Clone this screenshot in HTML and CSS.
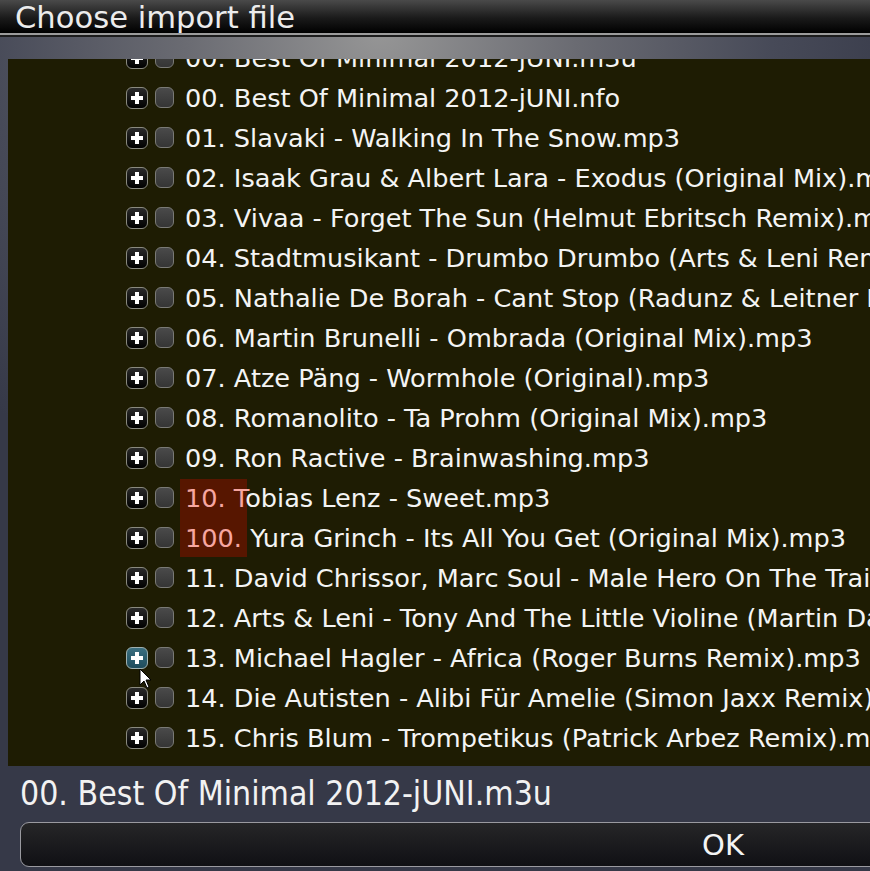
FILE: index.html
```html
<!DOCTYPE html>
<html>
<head>
<meta charset="utf-8">
<link rel="stylesheet" href="styles.css">
</head>
<body>
<div class="dialog">
  <div class="titlebar"><span class="title">Choose import file</span></div>
  <div class="sep"></div>
  <div class="panel">
    <div class="list">
      <div class="mark"></div>
      <div class="rows">
        <div class="row"><span class="plus"></span><span class="check"></span><span class="name">00. Best Of Minimal 2012-jUNI.m3u</span></div>
        <div class="row"><span class="plus"></span><span class="check"></span><span class="name">00. Best Of Minimal 2012-jUNI.nfo</span></div>
        <div class="row"><span class="plus"></span><span class="check"></span><span class="name">01. Slavaki - Walking In The Snow.mp3</span></div>
        <div class="row"><span class="plus"></span><span class="check"></span><span class="name">02. Isaak Grau &amp; Albert Lara - Exodus (Original Mix).mp3</span></div>
        <div class="row"><span class="plus"></span><span class="check"></span><span class="name">03. Vivaa - Forget The Sun (Helmut Ebritsch Remix).mp3</span></div>
        <div class="row"><span class="plus"></span><span class="check"></span><span class="name">04. Stadtmusikant - Drumbo Drumbo (Arts &amp; Leni Remix).mp3</span></div>
        <div class="row"><span class="plus"></span><span class="check"></span><span class="name">05. Nathalie De Borah - Cant Stop (Radunz &amp; Leitner Remix).mp3</span></div>
        <div class="row"><span class="plus"></span><span class="check"></span><span class="name">06. Martin Brunelli - Ombrada (Original Mix).mp3</span></div>
        <div class="row"><span class="plus"></span><span class="check"></span><span class="name">07. Atze Päng - Wormhole (Original).mp3</span></div>
        <div class="row"><span class="plus"></span><span class="check"></span><span class="name">08. Romanolito - Ta Prohm (Original Mix).mp3</span></div>
        <div class="row"><span class="plus"></span><span class="check"></span><span class="name">09. Ron Ractive - Brainwashing.mp3</span></div>
        <div class="row"><span class="plus"></span><span class="check"></span><span class="name"><span class="hl">10. T</span>obias Lenz - Sweet.mp3</span></div>
        <div class="row"><span class="plus"></span><span class="check"></span><span class="name"><span class="hl">100.</span> Yura Grinch - Its All You Get (Original Mix).mp3</span></div>
        <div class="row"><span class="plus"></span><span class="check"></span><span class="name">11. David Chrissor, Marc Soul - Male Hero On The Train.mp3</span></div>
        <div class="row"><span class="plus"></span><span class="check"></span><span class="name">12. Arts &amp; Leni - Tony And The Little Violine (Martin Dawson Remix).mp3</span></div>
        <div class="row"><span class="plus hover"></span><span class="check"></span><span class="name">13. Michael Hagler - Africa (Roger Burns Remix).mp3</span></div>
        <div class="row"><span class="plus"></span><span class="check"></span><span class="name">14. Die Autisten - Alibi Für Amelie (Simon Jaxx Remix).mp3</span></div>
        <div class="row"><span class="plus"></span><span class="check"></span><span class="name">15. Chris Blum - Trompetikus (Patrick Arbez Remix).mp3</span></div>
      </div>
    </div>
    <div class="status">00. Best Of Minimal 2012-jUNI.m3u</div>
    <div class="button">OK</div>
  </div>
</div>
<svg class="cursor" width="14" height="22" viewBox="0 0 14 22"><path d="M1 1 L1 17 L5 13 L8 20 L10 19 L7 12 L12 12 Z" fill="#fff" stroke="#000" stroke-width="1"/></svg>
</body>
</html>
```

FILE: styles.css
```css
html, body {
  margin: 0;
  padding: 0;
  width: 870px;
  height: 871px;
  overflow: hidden;
  background: #363948;
}
body {
  position: relative;
  font-family: "DejaVu Sans", sans-serif;
}
.dialog {
  width: 1440px;
  height: 871px;
  background:
    radial-gradient(ellipse 560px 520px at 380px 30px, #969696 0%, #6a6b72 35%, #474a58 70%, #363948 100%);
}
.titlebar {
  height: 33px;
  background: linear-gradient(#4a4a4a, #1a1a1a 55%, #000);
  overflow: hidden;
}
.title {
  display: block;
  padding-left: 15px;
  font-size: 30.6px;
  line-height: 36px;
  color: #ececec;
}
.sep {
  height: 2px;
  background: #9c9c9c;
  border-bottom: 2px solid #1c1c1c;
}
.panel {
  padding-top: 22px;
}
.list {
  position: relative;
  margin-left: 8px;
  height: 707px;
  background: #1e1c03;
  overflow: hidden;
}
.rows {
  position: relative;
  margin-top: -21px;
  padding-left: 118px;
}
.row {
  display: flex;
  align-items: center;
  height: 40px;
  white-space: nowrap;
}
.plus {
  position: relative;
  box-sizing: border-box;
  width: 22px;
  height: 22px;
  border: 1px solid #8a8a80;
  border-radius: 6px;
  background: linear-gradient(#2a2a2a, #000);
  margin-top: -1px;
}
.plus::before, .plus::after {
  content: "";
  position: absolute;
  background: #fff;
}
.plus::before {
  left: 4px; top: 8px; width: 12px; height: 4px;
}
.plus::after {
  left: 8px; top: 4px; width: 4px; height: 12px;
}
.plus.hover {
  background: linear-gradient(#3b6f80, #1e4c5c);
  border-color: #9fb0b0;
}
.check {
  box-sizing: border-box;
  width: 19px;
  height: 21px;
  margin-left: 7px;
  margin-top: -1px;
  border: 1px solid #7a7a76;
  border-radius: 6px;
  background: linear-gradient(#4a4a4a, #353535);
}
.name {
  margin-left: 11px;
  font-size: 25.6px;
  line-height: 40px;
  color: #f4f4f4;
}
.hl {
  color: #f6a6a0;
}
.mark {
  position: absolute;
  left: 172px;
  top: 420px;
  width: 67px;
  height: 78px;
  background: #571600;
}
.status {
  height: 56px;
  line-height: 56px;
  padding-left: 20px;
  font-family: "DejaVu Sans Condensed", "DejaVu Sans", sans-serif;
  font-stretch: condensed;
  font-size: 33.5px;
  color: #f2f2f2;
}
.button {
  box-sizing: border-box;
  margin-left: 20px;
  width: 1406px;
  height: 45px;
  border: 1px solid #9a9aa0;
  border-radius: 9px;
  background: linear-gradient(#262628, #101014);
  color: #f4f4f4;
  text-align: center;
  font-size: 29px;
  line-height: 44px;
}
.cursor {
  position: absolute;
  left: 139px;
  top: 668px;
}
```
